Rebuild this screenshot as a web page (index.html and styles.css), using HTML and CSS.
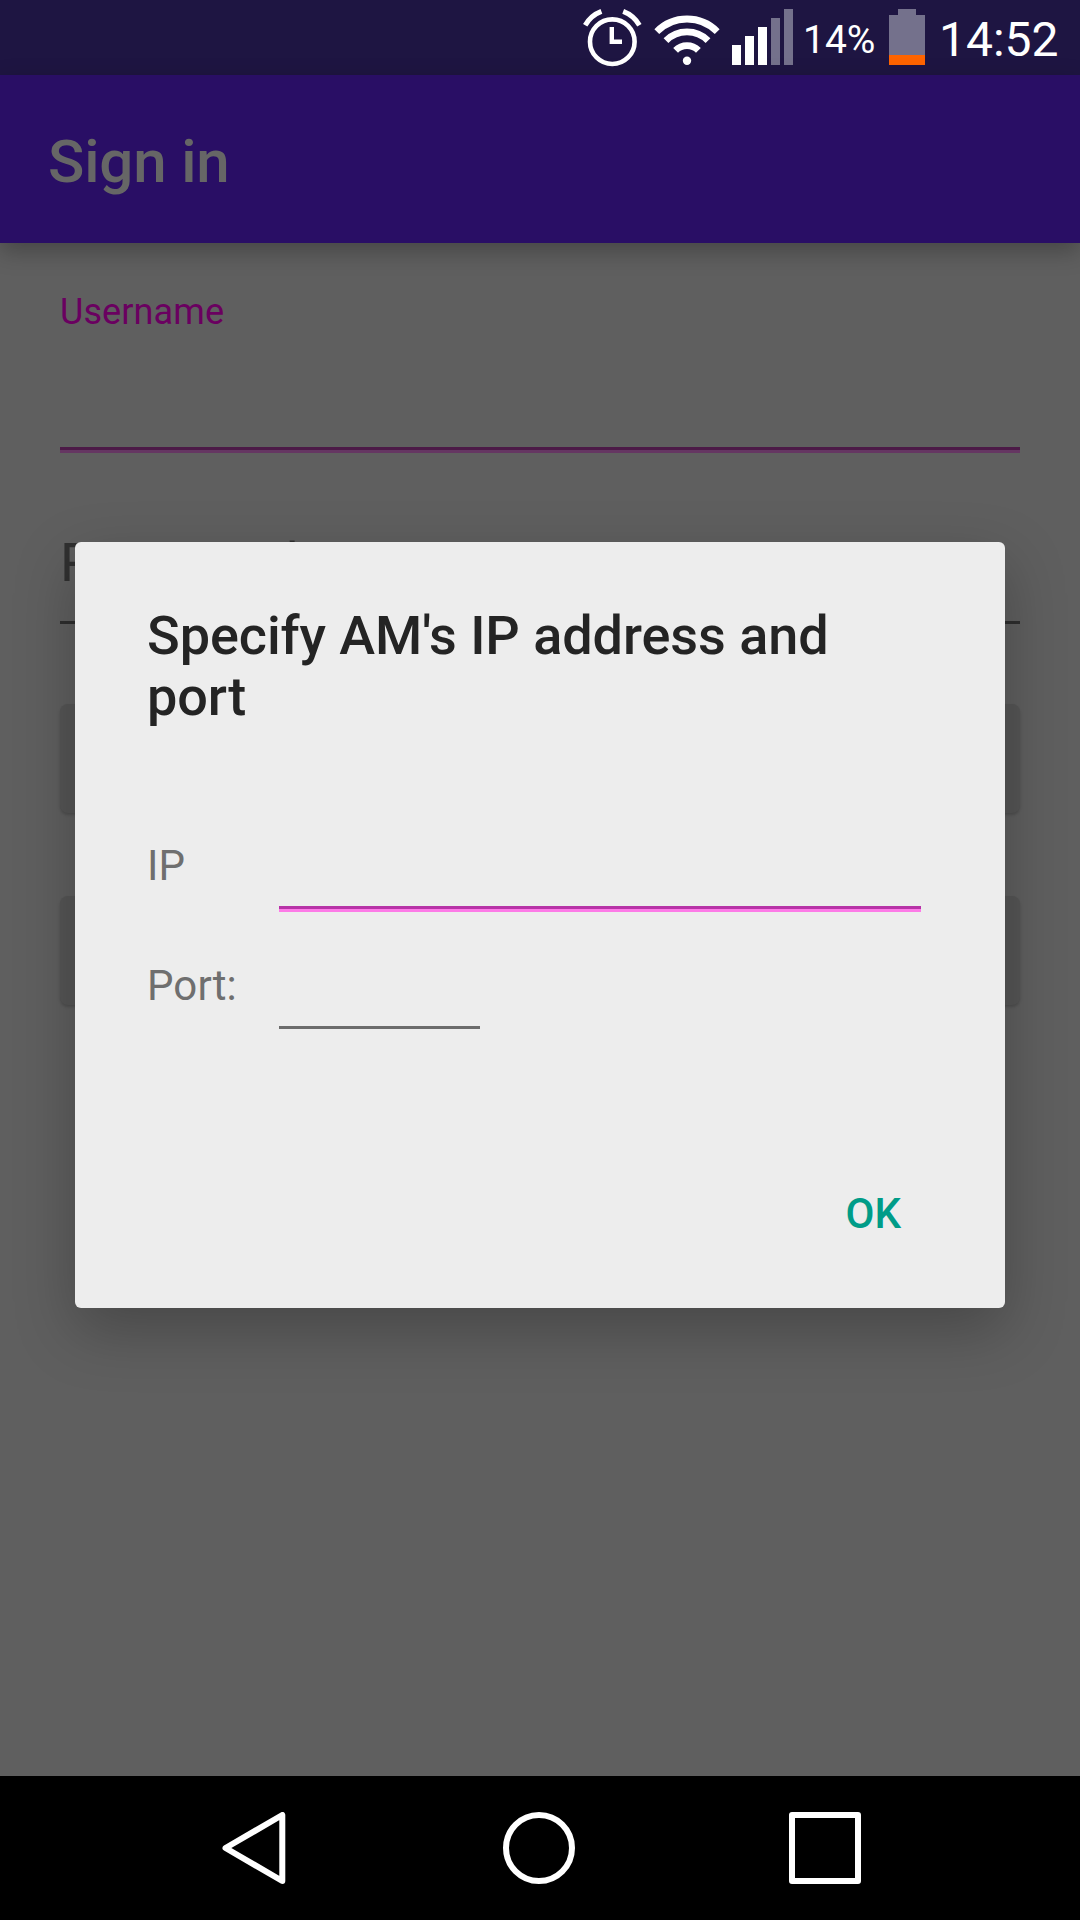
FILE: index.html
```html
<!DOCTYPE html>
<html lang="en">
<head>
<meta charset="utf-8">
<title>Sign in</title>
<link rel="stylesheet" href="styles.css">
</head>
<body>
<div class="screen">
  <header class="status-bar">
    <svg class="alarm" width="60" height="60" viewBox="582 8 60 60" fill="none" stroke="#fff">
      <circle cx="612.3" cy="41.7" r="22.3" stroke-width="4.6"/>
      <path d="M611.8 27v14.8h10.2" stroke-width="4.4"/>
      <path d="M585.2 25.2A32 32 0 0 1 601.4 11.4M639.4 25.2A32 32 0 0 0 623.2 11.4" stroke-width="5"/>
    </svg>
    <svg class="wifi" width="66" height="54" viewBox="654 13 66 54" fill="none" stroke="#fff" stroke-width="6.8">
      <path d="M656.8 31.6A42.5 42.5 0 0 1 717.2 31.6M666 40.6A29.7 29.7 0 0 1 708 40.6M675.6 50.4A16.1 16.1 0 0 1 698.4 50.4"/>
      <circle cx="687" cy="60.8" r="4.2" fill="#fff" stroke="none"/>
    </svg>
    <svg class="signal" width="61" height="56" viewBox="0 0 61 56" fill="#fff">
      <path d="M0 36h9v20H0zM13 27h9v29h-9zM26 18h9v38h-9z"/>
      <path d="M39 9h9v47h-9zM52 0h9v56h-9z" fill="#74718c"/>
    </svg>
    <span class="percent">14%</span>
    <svg class="battery" width="36" height="56" viewBox="0 0 36 56">
      <path d="M0 6h9V0h18v6h9v40H0z" fill="#74718c"/>
      <path d="M0 46h36v10H0z" fill="#ff6400"/>
    </svg>
    <span class="clock">14:52</span>
  </header>
  <div class="app-bar"><h1>Sign in</h1></div>
  <main class="form">
    <label class="username">Username</label>
    <div class="input focused"></div>
    <div class="password">Password</div>
    <div class="form-button"></div>
    <div class="form-button"></div>
  </main>
  <nav class="nav-bar">
    <svg width="640" height="72" viewBox="222 1812 640 72" fill="none" stroke="#fff" stroke-width="6" stroke-linejoin="round">
      <path d="M225.5 1848L282.3 1815V1881Z"/>
      <circle cx="539" cy="1848" r="33"/>
      <rect x="792" y="1815" width="66" height="66"/>
    </svg>
  </nav>
  <section class="dialog">
    <h2>Specify AM's IP address and port</h2>
    <div class="fields">
      <label>IP</label><div class="field ip"></div>
      <label>Port:</label><div class="field port"></div>
    </div>
    <div class="actions"><button>OK</button></div>
  </section>
</div>
</body>
</html>
```
FILE: styles.css
```css
* { box-sizing: border-box; }
body { margin: 0; font-family: Roboto, sans-serif; }
h1, h2 { margin: 0; font-weight: 500; }
svg { display: block; flex: none; }

.screen {
  position: relative;
  width: 1080px;
  height: 1920px;
  overflow: hidden;
  display: flex;
  flex-direction: column;
  background: #5f5f5f;
}

.status-bar {
  height: 75px;
  flex: none;
  display: flex;
  justify-content: flex-end;
  align-items: flex-start;
  padding: 9px 20px 0 0;
  background: #1e1542;
  color: #fff;
}
.alarm { margin: -1px 12px 0 0; }
.wifi { margin: 4px 12px 0 0; }
.percent { width: 73px; margin: 8px 0 0 10px; font-size: 39px; line-height: 46px; }
.battery { margin-left: 13px; }
.clock { width: 121px; margin: 3px 0 0 14px; font-size: 48px; line-height: 56px; }

.app-bar {
  position: relative;
  height: 168px;
  flex: none;
  padding: 5px 48px 0;
  background: #290e65;
  box-shadow: 0 8px 22px rgba(0, 0, 0, .27);
}
.app-bar h1 { font-size: 60px; line-height: 163px; letter-spacing: -.15px; color: #666; }

.form {
  flex: 1;
  display: flex;
  flex-direction: column;
  padding: 48px 60px 0;
}
.username { font-size: 36px; line-height: 42px; letter-spacing: .1px; color: #6a0060; }
.input { height: 120px; }
.focused { border-bottom: 3px solid #653662; box-shadow: inset 0 -3px #4c1a47; }
.password {
  height: 93px;
  margin-top: 78px;
  border-bottom: 3px solid #2e2e2e;
  font-size: 54px;
  line-height: 64px;
  color: #303030;
}
.form-button {
  height: 109px;
  margin-top: 80px;
  border-radius: 8px;
  background: #555;
  box-shadow: 0 2px 3px rgba(0, 0, 0, .18);
}
.form-button + .form-button { margin-top: 83px; }

.nav-bar {
  height: 144px;
  flex: none;
  padding: 36px 0 0 222px;
  background: #000;
}

.dialog {
  position: absolute;
  top: 542px;
  left: 75px;
  width: 930px;
  height: 766px;
  padding: 63px 72px 40px;
  display: flex;
  flex-direction: column;
  border-radius: 6px;
  background: #ededed;
  box-shadow: 0 22px 60px rgba(0, 0, 0, .25);
}
.dialog h2 { font-size: 54px; line-height: 61px; letter-spacing: -.06px; color: #242424; }
.fields {
  display: grid;
  grid-template-columns: 132px 642px;
  grid-auto-rows: 120px;
  margin-top: 65px;
}
.fields label { padding-top: 44px; font-size: 42px; line-height: 60px; letter-spacing: .1px; color: #6f6f6f; }
.ip { border-bottom: 3px solid #fd7be7; box-shadow: inset 0 -3px #b733a7; }
.port { width: 201px; height: 117px; border-bottom: 3px solid #6c6c6c; }
.actions { display: flex; justify-content: flex-end; margin-top: auto; }
.actions button {
  height: 108px;
  padding: 0 32px 0 24px;
  border: 0;
  background: none;
  font: 500 42px/108px Roboto, sans-serif;
  color: #009c88;
}
```
